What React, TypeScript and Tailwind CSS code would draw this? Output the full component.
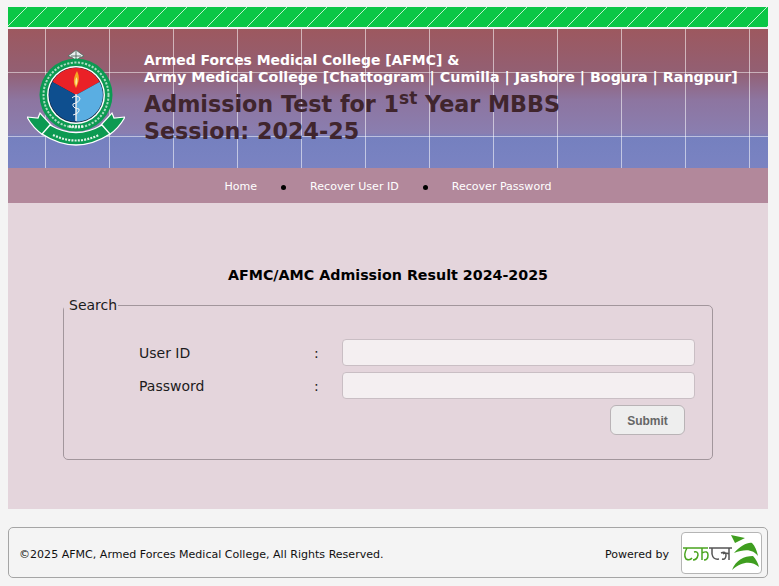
import React from 'react';

const Crest: React.FC = () => (
  <svg width="98" height="96" viewBox="0 0 98 96" className="shrink-0">
    {/* top ornament */}
    <path d="M49 0 L57 6 L52 8 L49 12 L46 8 L41 6 Z" fill="#e8eef0" stroke="#4a6a5a" strokeWidth="0.8" />
    <path d="M49 1 V11 M44 6 H54" stroke="#3c5a4c" strokeWidth="0.8" />
    {/* ribbon tails */}
    <path d="M0 67 L11 68 L13 63 L25 76 L16 85 Q6 78 0 67 Z" fill="#0c9a52" stroke="#fff" strokeWidth="1.2" />
    <path d="M98 67 L87 68 L85 63 L73 76 L82 85 Q92 78 98 67 Z" fill="#0c9a52" stroke="#fff" strokeWidth="1.2" />
    {/* ring */}
    <circle cx="49" cy="45" r="36.5" fill="#0c9a52" />
    <circle cx="49" cy="45" r="32.5" fill="none" stroke="#dff2e6" strokeWidth="2" strokeDasharray="2.2 1.4" opacity="0.75" />
    <circle cx="49" cy="45" r="29" fill="#fff" />
    <circle cx="49" cy="45" r="27.5" fill="#10233a" />
    {/* three sectors */}
    <path d="M49 45 L25.5 32 A26.5 26.5 0 0 1 72.5 32 Z" fill="#ea2127" />
    <path d="M49 45 L25.5 32 A26.5 26.5 0 0 0 49 71.5 Z" fill="#0e4f8f" />
    <path d="M49 45 L72.5 32 A26.5 26.5 0 0 1 49 71.5 Z" fill="#5aaee2" />
    {/* flame */}
    <path d="M50 21 C53 27 52 32 49 38 C46 33 46 28 50 21 Z" fill="#f6a623" />
    <path d="M49.5 27 C51 30 50.5 33 49 36 C48 33 48 30 49.5 27 Z" fill="#fde8a0" />
    {/* staff and snake */}
    <path d="M49 44 V71" stroke="#f2f2f2" strokeWidth="1.4" />
    <path d="M45 48 Q49 44 53 48 Q53 52 46 54 Q45 58 52 59 Q53 63 46 65" fill="none" stroke="#f2f2f2" strokeWidth="1" />
    {/* centre ribbon */}
    <path d="M23 75 Q49 90 75 75 L83 84 Q49 106 15 84 Z" fill="#0c9a52" stroke="#fff" strokeWidth="1.4" />
    <path d="M26 85 Q49 96 72 85" fill="none" stroke="#dff2e6" strokeWidth="2.2" strokeDasharray="2 1.2" />
    <path d="M42 76.5 H56" stroke="#e8f5ec" strokeWidth="2.4" strokeDasharray="2 1" />
  </svg>
);

const TeletalkLogo: React.FC = () => (
  <svg width="79" height="40" viewBox="0 0 79 40" className="block">
    {/* wordmark */}
    <g fill="none" strokeWidth="1.5">
      <path d="M1 15 H26 M5 15 Q1 22 4 26 Q8 28 10 25 M12 19 Q16 18 16 22 Q15 27 11 27 M20 15 V27 M20 20 Q26 17 26 22 Q26 27 22 27" stroke="#4aa41f" />
      <path d="M27 15 H50 M30 15 V21 Q31 27 37 26 M39 20 Q44 18 44 22 Q44 27 40 26 M47 15 V27 M47 21 Q43 19 41 21" stroke="#555" />
    </g>
    {/* swooshes */}
    <path d="M49 2 L63 5 L53 10 Z" fill="#3f9e1f" />
    <path d="M52 20 C58 13 66 9 70 10 C73 13 75 18 76 23 C72 17 64 15 52 20 Z" fill="#3f9e1f" />
    <path d="M50 37 C54 27 62 23 71 23 C74 26 76 30 77 34 C70 28 60 28 50 37 Z" fill="#3f9e1f" />
  </svg>
);

export default function App() {
  return (
    <div className="min-h-[586px] bg-[#f4f4f4] pt-[7px] pb-2 font-['DejaVu_Sans',Verdana,sans-serif] text-black">
      <div className="ml-2 w-[760px]">
        <div className="h-5 bg-[#0ac746] bg-[repeating-linear-gradient(135deg,transparent_0,transparent_13px,#bff0cf_13px,#bff0cf_14.14px)]" />

        <header className="mt-0.5 flex h-[139px] items-start bg-[repeating-linear-gradient(to_right,transparent_0,transparent_37px,rgba(255,255,255,0.55)_37px,rgba(255,255,255,0.55)_38px,transparent_38px,transparent_64px),repeating-linear-gradient(to_bottom,transparent_0,transparent_43px,rgba(255,255,255,0.5)_43px,rgba(255,255,255,0.5)_44px,transparent_44px,transparent_64px),linear-gradient(to_bottom,#9d585f_0%,#935f72_30%,#8d75a0_51%,#8a7eb0_75%,#7580bf_78%,#7a83c2_100%)]">
          <div className="ml-[19px] mt-[21px]">
            <Crest />
          </div>
          <div className="ml-[19px] mt-[23px]">
            <p className="text-[13.95px] leading-[17px] font-bold text-white">
              Armed Forces Medical College [AFMC] &amp;
              <br />
              <span className="text-[14.27px]">Army Medical College [Chattogram | Cumilla | Jashore | Bogura | Rangpur]</span>
            </p>
            <h1 className="mt-[5px] text-[22.25px] leading-[27px] font-bold text-[#40252d]">
              Admission Test for 1<sup className="text-[17px]">st</sup> Year MBBS
              <br />
              Session: 2024-25
            </h1>
          </div>
        </header>

        <nav className="flex h-[35px] items-center justify-center bg-[#b2889b] pt-[3px] text-[11.05px] text-white">
          <span className="pt-px">Home</span>
          <span className="mx-6 size-[5px] rounded-full bg-black" />
          <span className="pt-px">Recover User ID</span>
          <span className="mx-6 size-[5px] rounded-full bg-black" />
          <span className="pt-px">Recover Password</span>
        </nav>

        <main className="h-[306px] bg-[#e4d5dc] pt-[63px]">
          <h2 className="text-center text-[14.25px] leading-[18px] font-bold">AFMC/AMC Admission Result 2024-2025</h2>
          <fieldset className="mx-[55px] mt-[12px] h-[164px] rounded-[5px] border border-[#a2969c] pl-[75px] pr-[17px]">
            <legend className="-ml-[75px] pr-px pl-[5px] text-sm leading-[18px] text-[#1c1c1c]">Search</legend>
            <div className="mt-[25px] grid grid-cols-[175px_28px_1fr] items-center gap-y-[6px] text-sm text-[#1c1c1c]">
              <label>User ID</label>
              <span>:</span>
              <input className="h-[27px] w-full rounded-[4px] border border-[#c9bec4] bg-[#f4eff1]" />
              <label>Password</label>
              <span>:</span>
              <input type="password" className="h-[27px] w-full rounded-[4px] border border-[#c9bec4] bg-[#f4eff1]" />
            </div>
            <div className="mt-[6px] flex justify-end pr-[10px]">
              <button className="h-[30px] w-[75px] rounded-[6px] border border-[#b9b3b6] bg-[#eeeeee] pt-px font-['Liberation_Sans',Arial,sans-serif] text-xs font-bold text-[#666666]">
                Submit
              </button>
            </div>
          </fieldset>
        </main>

        <footer className="mt-[18px] flex h-[51px] items-center justify-between rounded-[5px] border border-[#a5a5a5] pl-[10px] pr-[5px] text-[11.05px] text-[#111111]">
          <span className="pt-[6px]">©2025 AFMC, Armed Forces Medical College, All Rights Reserved.</span>
          <div className="flex items-center gap-3">
            <span className="pt-[6px]">Powered by</span>
            <div className="rounded-[4px] border border-[#b5b5b5] bg-white">
              <TeletalkLogo />
            </div>
          </div>
        </footer>
      </div>
    </div>
  );
}
